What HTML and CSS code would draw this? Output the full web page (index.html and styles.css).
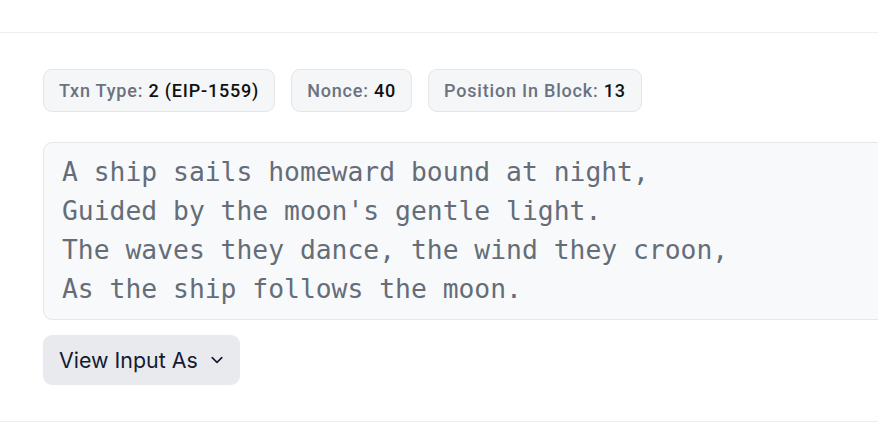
FILE: index.html
```
<!DOCTYPE html>
<html>
<head>
<meta charset="utf-8">
<link rel="stylesheet" href="styles.css">
</head>
<body>
<div class="page">
  <div class="topbar"></div>
  <div class="section">
    <div class="badges">
      <div class="badge"><span class="label">Txn Type: </span><span class="value">2 (EIP-1559)</span></div>
      <div class="badge"><span class="label">Nonce: </span><span class="value">40</span></div>
      <div class="badge"><span class="label">Position In Block: </span><span class="value">13</span></div>
    </div>
    <pre class="input">A ship sails homeward bound at night,
Guided by the moon's gentle light.
The waves they dance, the wind they croon,
As the ship follows the moon.</pre>
    <button class="view-btn">View Input As
      <svg class="chev" width="16" height="16" viewBox="0 0 20 20" fill="none" stroke="currentColor" stroke-width="2" stroke-linecap="round" stroke-linejoin="round"><path d="M4 7l6 6 6-6"/></svg>
    </button>
  </div>
</div>
</body>
</html>
```
FILE: styles.css
```
html, body {
  margin: 0;
  padding: 0;
  background: #ffffff;
  overflow: hidden;
}
.page {
  width: 1200px;
  font-family: Inter, "Noto Sans", sans-serif;
}
.topbar {
  height: 32px;
  border-bottom: 1px solid #eceef1;
}
.section {
  padding: 36px 0 36px 43px;
  border-bottom: 1px solid #eceef1;
}
.badges {
  display: flex;
  gap: 16px;
}
.badge {
  background: #f5f6f7;
  border: 1px solid #e3e5e8;
  border-radius: 9px;
  padding: 0 15px;
  height: 43px;
  box-sizing: border-box;
  display: block;
  line-height: 41px;
  font-family: Roboto, "Noto Sans", sans-serif;
  font-size: 18px;
  font-weight: 500;
  letter-spacing: 0.8px;
  white-space: pre;
}
.label { color: #6b7280; }
.value { color: #111111; }
.input {
  margin: 30px 0 0 0;
  background: #f8f9fa;
  border: 1px solid #e5e7eb;
  border-radius: 9px;
  padding: 10px 18px;
  font-family: "DejaVu Sans Mono", monospace;
  font-size: 26.35px;
  line-height: 39px;
  color: #646d78;
}
.view-btn {
  margin-top: 15px;
  height: 50px;
  padding: 0 15px 0 16px;
  background: #e8eaee;
  border: none;
  border-radius: 9px;
  font-family: Inter, "Noto Sans", sans-serif;
  font-size: 21.4px;
  color: #141b33;
  display: flex;
  align-items: center;
  gap: 11px;
}
.chev { color: #141b33; }
```
